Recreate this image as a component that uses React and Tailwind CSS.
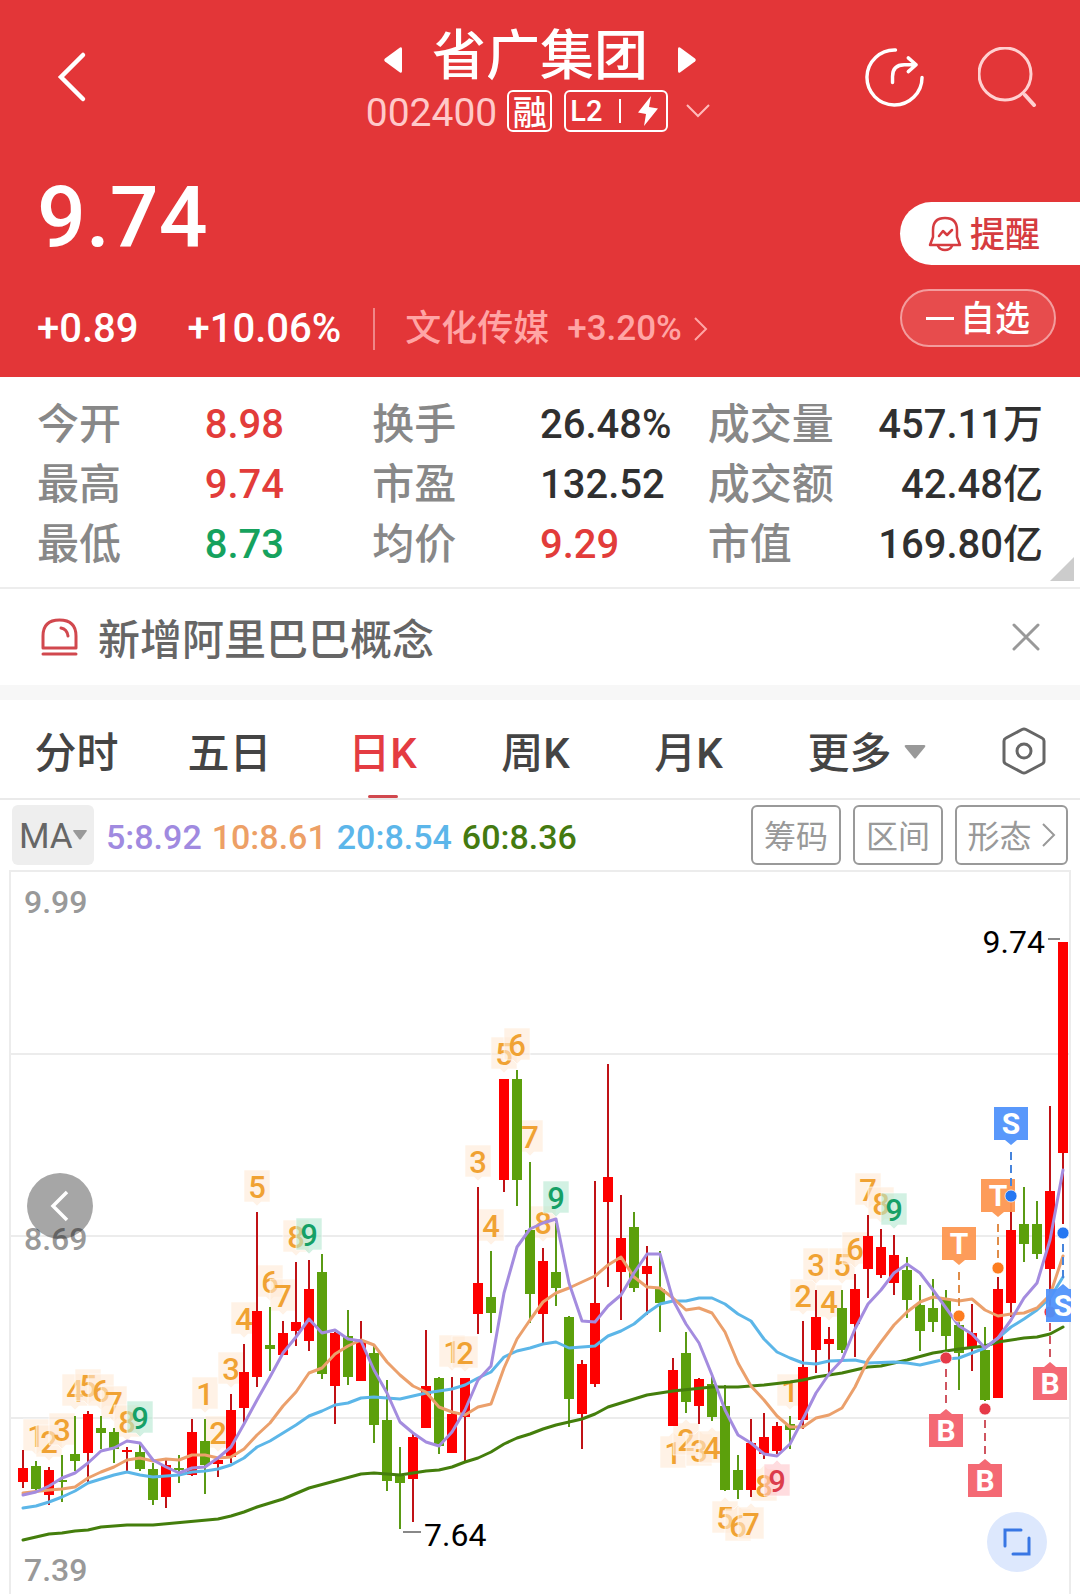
import { useState } from 'react';

const STATS = [
  { label: '今开', value: '8.98', tone: 'text-[#e23c3a]' },
  { label: '换手', value: '26.48%', tone: 'text-[#303030]' },
  { label: '成交量', value: '457.11万', tone: 'text-[#303030]' },
  { label: '最高', value: '9.74', tone: 'text-[#e23c3a]' },
  { label: '市盈', value: '132.52', tone: 'text-[#303030]' },
  { label: '成交额', value: '42.48亿', tone: 'text-[#303030]' },
  { label: '最低', value: '8.73', tone: 'text-[#16a25e]' },
  { label: '均价', value: '9.29', tone: 'text-[#e23c3a]' },
  { label: '市值', value: '169.80亿', tone: 'text-[#303030]' },
];

const TABS = ['分时', '五日', '日K', '周K', '月K'];

const AVERAGES = [
  { text: '5:8.92', tone: 'text-[#a08ae0]' },
  { text: '10:8.61', tone: 'text-[#eda066]' },
  { text: '20:8.54', tone: 'text-[#5cb6ea]' },
  { text: '60:8.36', tone: 'text-[#447a10]' },
];

// [up, high, low, body top, body bottom], one entry per trading day
const CANDLES = [
  [1, 1450, 1488, 1468, 1482], [0, 1461, 1492, 1466, 1489], [1, 1467, 1505, 1470, 1495],
  [0, 1455, 1502, 1480, 1482], [0, 1416, 1471, 1454, 1461], [1, 1411, 1482, 1414, 1453],
  [0, 1416, 1449, 1428, 1433], [0, 1428, 1463, 1432, 1449], [1, 1447, 1473, 1450, 1452],
  [0, 1443, 1471, 1452, 1469], [0, 1463, 1505, 1469, 1500], [1, 1460, 1508, 1465, 1497],
  [0, 1455, 1483, 1468, 1470], [1, 1419, 1476, 1432, 1475], [0, 1419, 1494, 1441, 1465],
  [1, 1458, 1477, 1460, 1464], [1, 1394, 1463, 1410, 1457], [1, 1344, 1423, 1372, 1408],
  [1, 1212, 1387, 1311, 1377], [0, 1307, 1371, 1345, 1349], [1, 1321, 1355, 1333, 1355],
  [1, 1262, 1346, 1322, 1331], [1, 1260, 1351, 1289, 1341], [0, 1254, 1379, 1272, 1374],
  [1, 1332, 1424, 1333, 1386], [0, 1310, 1385, 1336, 1377], [1, 1321, 1381, 1342, 1381],
  [0, 1345, 1443, 1353, 1425], [0, 1380, 1491, 1420, 1481], [0, 1447, 1529, 1476, 1483],
  [1, 1433, 1522, 1437, 1479], [1, 1330, 1428, 1386, 1428], [0, 1377, 1454, 1378, 1446],
  [1, 1377, 1453, 1414, 1453], [1, 1378, 1462, 1378, 1417], [1, 1187, 1334, 1283, 1314],
  [0, 1251, 1333, 1297, 1313], [1, 1079, 1192, 1079, 1180], [0, 1070, 1206, 1079, 1180],
  [0, 1162, 1323, 1230, 1294], [1, 1248, 1343, 1261, 1314], [0, 1223, 1306, 1272, 1288],
  [0, 1316, 1427, 1317, 1399], [1, 1360, 1449, 1364, 1414], [1, 1181, 1387, 1303, 1384],
  [1, 1064, 1287, 1177, 1202], [1, 1195, 1320, 1238, 1272], [0, 1212, 1292, 1227, 1288],
  [1, 1246, 1315, 1266, 1274], [0, 1251, 1332, 1289, 1303], [1, 1358, 1426, 1370, 1426],
  [0, 1332, 1413, 1353, 1402], [1, 1378, 1424, 1379, 1406], [0, 1377, 1421, 1384, 1417],
  [0, 1385, 1491, 1406, 1490], [0, 1455, 1499, 1470, 1490], [1, 1419, 1497, 1443, 1490],
  [1, 1413, 1459, 1437, 1454], [1, 1422, 1454, 1426, 1451], [0, 1416, 1449, 1424, 1430],
  [1, 1321, 1429, 1367, 1420], [1, 1290, 1373, 1317, 1350], [1, 1327, 1374, 1339, 1344],
  [0, 1290, 1353, 1308, 1350], [1, 1274, 1357, 1289, 1324], [1, 1215, 1298, 1236, 1269],
  [1, 1229, 1278, 1247, 1275], [1, 1235, 1295, 1255, 1283], [0, 1257, 1318, 1270, 1300],
  [0, 1285, 1351, 1305, 1331], [0, 1279, 1332, 1308, 1322], [0, 1290, 1363, 1299, 1336],
  [0, 1313, 1390, 1325, 1353], [1, 1304, 1371, 1333, 1348], [0, 1327, 1401, 1350, 1400],
  [1, 1277, 1398, 1289, 1398], [1, 1200, 1317, 1230, 1303], [0, 1187, 1262, 1224, 1244],
  [0, 1201, 1259, 1224, 1254], [1, 1106, 1307, 1191, 1269], [1, 942, 1224, 942, 1153],
];

const dayX = (i) => 23 + i * 13;

const MA60 =
  '23,1540 49,1534 62,1533 75,1531 88,1530 101,1527 127,1525 153,1525 218,1519 231,1516 244,1512 257,1507 270,1503 283,1499 309,1488 335,1481 361,1474 374,1473 400,1475 426,1471 439,1470 452,1467 465,1462 478,1458 491,1452 504,1444 517,1438 530,1434 543,1429 556,1425 569,1422 582,1419 595,1414 608,1407 647,1395 673,1391 712,1387 738,1387 764,1385 790,1382 803,1380 816,1377 842,1373 868,1367 881,1366 907,1360 933,1353 959,1349 985,1346 998,1342 1024,1338 1037,1337 1050,1334 1063,1327';
const MA20 =
  '23,1508 36,1506 49,1502 62,1497 75,1491 88,1483 101,1479 114,1475 127,1472 140,1475 153,1477 179,1475 192,1472 205,1471 218,1469 231,1465 244,1458 257,1447 270,1441 283,1433 296,1425 309,1416 322,1411 335,1405 348,1403 361,1398 374,1397 400,1399 413,1396 426,1393 439,1391 452,1389 465,1385 478,1378 491,1372 504,1357 517,1351 530,1348 543,1344 556,1342 569,1348 595,1346 608,1336 621,1331 634,1324 647,1313 660,1304 673,1301 686,1301 699,1298 712,1298 725,1304 738,1314 751,1321 764,1339 777,1352 790,1358 803,1363 816,1364 829,1361 855,1360 868,1363 894,1362 907,1363 920,1365 933,1362 946,1359 959,1358 972,1353 985,1348 998,1338 1011,1327 1024,1319 1037,1310 1050,1298 1063,1277';
const MA10 =
  '23,1493 49,1490 62,1489 75,1487 88,1478 101,1472 114,1467 127,1460 140,1458 153,1461 166,1459 179,1460 192,1455 205,1455 218,1458 231,1457 244,1449 257,1435 270,1423 283,1406 296,1392 309,1373 322,1368 335,1354 348,1346 361,1340 374,1345 387,1362 400,1375 413,1386 426,1392 439,1407 452,1412 465,1415 478,1407 491,1404 504,1368 517,1339 530,1320 543,1302 556,1293 569,1288 582,1282 595,1276 608,1265 621,1257 634,1277 647,1287 660,1288 673,1298 686,1310 699,1308 712,1313 725,1332 738,1363 751,1386 764,1400 777,1416 790,1427 803,1427 816,1418 829,1415 842,1408 855,1387 868,1360 881,1342 894,1325 907,1312 920,1302 933,1297 946,1299 959,1301 972,1299 985,1310 998,1316 1011,1314 1024,1313 1037,1308 1050,1295 1063,1256';
const MA5 =
  '23,1495 36,1492 49,1486 62,1478 75,1473 88,1463 101,1451 114,1448 127,1441 140,1443 153,1460 166,1467 179,1473 192,1468 205,1467 218,1458 231,1447 244,1424 257,1400 270,1377 283,1353 296,1337 309,1319 322,1333 335,1330 348,1339 361,1341 374,1370 387,1393 400,1422 413,1433 426,1442 439,1446 452,1432 465,1410 478,1380 491,1366 504,1293 517,1247 530,1229 543,1223 556,1219 569,1283 582,1321 595,1322 608,1306 621,1295 634,1273 647,1254 660,1254 673,1300 686,1324 699,1343 712,1375 725,1410 738,1435 751,1443 764,1454 777,1456 790,1444 803,1419 816,1393 829,1374 842,1360 855,1329 868,1304 881,1290 894,1273 907,1264 920,1273 933,1290 946,1308 959,1326 972,1334 985,1348 998,1338 1011,1320 1024,1298 1037,1283 1050,1240 1063,1170';

// nine-turn runs: first day, how many counts, and the side they are drawn on
const RUNS = [
  { start: 1, count: 9, below: false },
  { start: 14, count: 9, below: false },
  { start: 33, count: 9, below: false },
  { start: 50, count: 9, below: true },
  { start: 59, count: 9, below: false },
];

const SIGNALS = [
  { kind: 'B', day: 71, dot: 1358, box: 1414 },
  { kind: 'B', day: 74, dot: 1409, box: 1464 },
  { kind: 'B', day: 79, dot: 1312, box: 1367 },
  { kind: 'T', day: 72, dot: 1316, box: 1227 },
  { kind: 'T', day: 75, dot: 1268, box: 1179 },
  { kind: 'S', day: 76, dot: 1196, box: 1107 },
  { kind: 'S', day: 80, dot: 1233, box: 1289 },
];

const SIGNAL_COLORS = {
  B: { box: '#f3606b', dot: '#e63a48', line: '#cf5560' },
  T: { box: '#fd9650', dot: '#fd7d20', line: '#e08c48' },
  S: { box: '#4f92fb', dot: '#2577f2', line: '#4684dc' },
};

function CountTag({ day, n, below }) {
  const x = dayX(day);
  const [, high, low] = CANDLES[day];
  const top = below ? low + 10 : high - 42;
  const last = n === 9;
  const fill = !last ? '#ffead6' : below ? '#ffc4ca' : '#b4e8d0';
  const color = !last ? '#f0a233' : below ? '#dc3c4c' : '#16a066';
  const shape = below
    ? `M${x - 13} ${top}H${x - 4}L${x} ${top - 4}L${x + 4} ${top}H${x + 13}V${top + 32}H${x - 13}Z`
    : `M${x - 13} ${top}H${x + 13}V${top + 32}H${x + 4}L${x} ${top + 36}L${x - 4} ${top + 32}H${x - 13}Z`;
  return (
    <g>
      <path d={shape} fill={fill} fillOpacity="0.6" stroke="#fff" strokeOpacity="0.6" />
      <text x={x} y={top + 28} fill={color} fontSize="31" fontWeight="500" textAnchor="middle">
        {n}
      </text>
    </g>
  );
}

function Signal({ kind, day, dot, box }) {
  const x = dayX(day);
  const c = SIGNAL_COLORS[kind];
  const under = box > dot;
  const shape = under
    ? `M${x - 17} ${box}H${x - 6}L${x} ${box - 5}L${x + 6} ${box}H${x + 17}V${box + 33}H${x - 17}Z`
    : `M${x - 17} ${box}H${x + 17}V${box + 33}H${x + 6}L${x} ${box + 38}L${x - 6} ${box + 33}H${x - 17}Z`;
  return (
    <g>
      <line
        x1={x}
        x2={x}
        y1={under ? dot + 11 : box + 45}
        y2={under ? box - 9 : dot - 9}
        stroke={c.line}
        strokeWidth="2"
        strokeDasharray="8 5"
      />
      <circle cx={x} cy={dot} r="6" fill={c.dot} stroke="#fff" strokeWidth="1" strokeOpacity="0.7" />
      <path d={shape} fill={c.box} fillOpacity="0.94" />
      <text x={x} y={box + 27} fill="#fff" fontSize="30" fontWeight="700" textAnchor="middle">
        {kind}
      </text>
    </g>
  );
}

function KLineChart() {
  return (
    <svg viewBox="0 870 1080 724" className="block w-full" role="img" aria-label="日K线图">
      <defs>
        <clipPath id="plot">
          <rect x="10" y="870" width="1061" height="724" />
        </clipPath>
      </defs>
      <path d="M10 1594V871H1070V1594" fill="none" stroke="#ececec" strokeWidth="2" />
      <path d="M10 1054H1070M10 1236H1070M10 1418H1070" stroke="#ececec" strokeWidth="2" />

      <g clipPath="url(#plot)">
        {RUNS.map((run) =>
          Array.from({ length: run.count }, (_, k) => (
            <CountTag key={run.start + k} day={run.start + k} n={k + 1} below={run.below} />
          ))
        )}

        {CANDLES.map(([up, high, low, top, bottom], i) => (
          <g key={i}>
            <line
              x1={dayX(i)}
              x2={dayX(i)}
              y1={high}
              y2={low}
              stroke={up ? '#c01216' : '#5a9a14'}
              strokeWidth="2"
            />
            <rect
              x={dayX(i) - 5}
              y={top}
              width="10"
              height={bottom - top}
              fill={up ? '#fe0000' : '#5ca00c'}
            />
          </g>
        ))}

        <g fill="none" strokeWidth="3" strokeLinejoin="round" strokeLinecap="round">
          <polyline points={MA60} stroke="#447e0c" />
          <polyline points={MA20} stroke="#5cb6e8" />
          <polyline points={MA10} stroke="#eba06c" />
          <polyline points={MA5} stroke="#a48cdf" />
        </g>

        {SIGNALS.map((s) => (
          <Signal key={s.kind + s.day} {...s} />
        ))}
      </g>

      {/* Price scale and extremes */}
      <g fontSize="32" fontWeight="500" fill="#999">
        <text x="24" y="913">9.99</text>
        <text x="24" y="1250">8.69</text>
        <text x="24" y="1581">7.39</text>
      </g>
      <g fontSize="32" fill="#000">
        <text x="1045" y="953" textAnchor="end">9.74</text>
        <text x="424" y="1546">7.64</text>
      </g>
      <path d="M1048 939H1060M403 1532H421" stroke="#888" strokeWidth="2" />
    </svg>
  );
}

function Header() {
  return (
    <header className="bg-[#e33638] text-white pt-[22px] pb-[24px]">
      <div className="grid grid-cols-[1fr_auto_1fr] items-center">
        <button type="button" aria-label="返回" className="ml-[54px] justify-self-start">
          <svg width="34" height="54" viewBox="0 0 34 54" fill="none" stroke="currentColor" strokeWidth="4.500" strokeLinecap="round">
            <path d="M29 5L7 27L29 49" />
          </svg>
        </button>

        <div className="flex flex-col items-center gap-1.5">
          <div className="flex items-center gap-[30px] h-[62px] pt-[14px]">
            <button type="button" aria-label="上一只">
              <svg width="18" height="28" viewBox="0 0 18 28" fill="currentColor">
                <path d="M16 1.500Q18 0.500 18 3V25Q18 27.500 16 26.500L1 15.500Q-0.500 14 1 12.500Z" />
              </svg>
            </button>
            <h1 className="pb-1.5 text-[54px] leading-[48px] font-medium">省广集团</h1>
            <button type="button" aria-label="下一只">
              <svg width="18" height="28" viewBox="0 0 18 28" fill="currentColor">
                <path d="M2 1.500Q0 0.500 0 3V25Q0 27.500 2 26.500L17 15.500Q18.500 14 17 12.500Z" />
              </svg>
            </button>
          </div>
          <div className="flex items-center h-[42px] pr-1 font-medium">
            <span className="pt-1 text-[39px] leading-[42px] font-normal text-[#ffc9c9]">002400</span>
            <span className="ml-2.5 w-[45px] h-[42px] flex items-center justify-center pt-1 border-2 border-white rounded-md text-[34px] leading-[38px]">
              融
            </span>
            <span className="ml-3 h-[42px] w-[104px] flex items-center justify-between pl-1 pr-2 border-2 border-white rounded-md text-[29px] leading-[38px]">
              L2
              <span className="w-0.5 h-6 bg-white" />
              <svg width="20" height="30" viewBox="0 0 20 30" fill="currentColor">
                <path d="M13 0L0 16.500L8 18L6 30L20 12.500L11 11Z" />
              </svg>
            </span>
            <button type="button" aria-label="展开" className="ml-[18px]">
              <svg width="24" height="14" viewBox="0 0 24 14" fill="none" stroke="#fbb" strokeWidth="2">
                <path d="M1 1L12 12L23 1" />
              </svg>
            </button>
          </div>
        </div>

        <div className="flex items-center justify-end gap-[54px] mr-[42px]">
          <button type="button" aria-label="分享">
            <svg width="59" height="59" viewBox="0 0 60 60" fill="none" stroke="currentColor" strokeWidth="3.500" strokeLinecap="round" strokeLinejoin="round">
              <path d="M31 2A28 28 0 1 0 58 30" />
              <path d="M28 35V29Q28 17 40 17H52M44 10L52 17L44 24" />
            </svg>
          </button>
          <button type="button" aria-label="搜索" className="text-[#ffd0d0]">
            <svg width="60" height="60" viewBox="0 0 60 60" fill="none" stroke="currentColor" strokeWidth="3" strokeLinecap="round">
              <circle cx="27" cy="27" r="26" />
              <path d="M47 48L56 58" strokeWidth="4" />
            </svg>
          </button>
        </div>
      </div>

      <div className="flex justify-between">
        <div className="pl-[37px] pt-[42px]">
          <p className="text-[86px] leading-[88px] font-medium">9.74</p>
          <div className="mt-[43px] h-12 flex items-center text-[40px] leading-[48px] font-medium">
            <span>+0.89</span>
            <span className="ml-[49px]">+10.06%</span>
            <span className="ml-8 w-0.5 h-[42px] bg-[#f08688]" />
            <a href="#sector" className="ml-[30px] flex items-center text-[#ffa5a5]">
              <span className="text-[36px]">文化传媒</span>
              <span className="ml-[18px] text-[35px]">+3.20%</span>
              <svg className="ml-3" width="14" height="24" viewBox="0 0 14 24" fill="none" stroke="currentColor" strokeWidth="2">
                <path d="M1 1L12 12L1 23" />
              </svg>
            </a>
          </div>
        </div>

        <div className="w-[180px] pt-[70px] flex flex-col gap-6 items-start">
          <button type="button" className="w-full h-[63px] pl-7 flex items-center gap-2 rounded-l-full bg-white text-[#d63c40] text-[35px] leading-[48px] font-medium">
            <svg width="34" height="36" viewBox="0 0 34 36" fill="none" stroke="currentColor" strokeWidth="2.500" strokeLinejoin="round" strokeLinecap="round">
              <path d="M5 21V14Q5 2 17 2T29 14V21L32 29H2L5 21Z" />
              <path d="M10 30Q12 34 17 34T24 30" />
              <path d="M11 20L15 15L19 19L24 14" />
            </svg>
            <span className="pt-1">提醒</span>
          </button>
          <button type="button" className="w-[156px] h-[58px] flex items-center justify-center gap-1.5 rounded-full border-2 border-[#f39c9d] bg-[#e74c4d] text-[35px] leading-[48px] font-medium">
            <span className="w-7 h-[3px] bg-white" />
            <span className="pt-1">自选</span>
          </button>
        </div>
      </div>
    </header>
  );
}

function Stats() {
  return (
    <section className="relative border-b-2 border-[#ededed] pt-[18px] pb-3 px-[37px]">
      <dl className="grid grid-cols-3 text-[40px] leading-[60px] font-medium">
        {STATS.map((s, i) => (
          <div key={s.label} className="flex whitespace-nowrap">
            <dt className="w-1/2 text-[42px] text-[#888]">{s.label}</dt>
            <dd className={`${i % 3 === 2 ? 'w-1/2 flex justify-end' : ''} ${s.tone}`}>{s.value}</dd>
          </div>
        ))}
      </dl>
      <svg className="absolute right-1.5 bottom-1.5" width="24" height="24" viewBox="0 0 24 24" fill="#ccc">
        <path d="M24 0V24H0Z" />
      </svg>
    </section>
  );
}

function Notice({ onClose }) {
  return (
    <section className="h-24 flex items-center pl-[41px] pr-10">
      <svg width="37" height="38" viewBox="0 0 37 38" fill="none" stroke="#d1484e" strokeWidth="3" strokeLinecap="round" strokeLinejoin="round">
        <path d="M2 30V18Q2 2 18.500 2T35 18V30Z" />
        <path d="M20 10Q26 11 27 18" />
        <path d="M2 36H35" />
      </svg>
      <p className="ml-5 pt-2 text-[42px] leading-[60px] font-medium text-[#666]">新增阿里巴巴概念</p>
      <button type="button" aria-label="关闭" onClick={onClose} className="ml-auto">
        <svg width="28" height="28" viewBox="0 0 28 28" fill="none" stroke="#999" strokeWidth="3" strokeLinecap="round">
          <path d="M2 2L26 26M26 2L2 26" />
        </svg>
      </button>
    </section>
  );
}

export default function App() {
  const [tab, setTab] = useState('日K');
  const [notice, setNotice] = useState(true);

  return (
    <main className="bg-white overflow-hidden font-[Roboto,'Noto_Sans_CJK_SC',sans-serif]">
      <Header />
      <Stats />
      {notice && <Notice onClose={() => setNotice(false)} />}
      <div className="h-[15px] bg-[#f7f7f7]" />

      {/* Period tabs */}
      <nav className="h-[100px] grid grid-cols-[repeat(5,153fr)_203fr_112fr] border-b-2 border-[#eaeaea] text-[42px] leading-[60px] font-medium text-[#444]">
        {TABS.map((t) => (
          <button
            key={t}
            type="button"
            onClick={() => setTab(t)}
            className={`relative flex items-center justify-center pt-2.5 ${t === tab ? 'text-[#e43c42]' : ''}`}
          >
            {t}
            {t === tab && <span className="absolute bottom-0 w-[30px] h-[3px] rounded-full bg-[#d1484e]" />}
          </button>
        ))}
        <button type="button" aria-haspopup="menu" className="flex items-center justify-center gap-3 pt-1.5">
          <span className="pt-1">更多</span>
          <svg width="22" height="14" viewBox="0 0 22 14" fill="#999">
            <path d="M2 0H20Q22 0 21 2L12 13Q11 14 10 13L1 2Q0 0 2 0Z" />
          </svg>
        </button>
        <button type="button" aria-label="设置" className="flex items-center justify-center pt-1">
          <svg width="44" height="48" viewBox="0 0 44 48" fill="none" stroke="#666" strokeWidth="3" strokeLinejoin="round">
            <path d="M20 2.500Q22 1.500 24 2.500L40 11Q42 12 42 14V34Q42 36 40 37L24 45.500Q22 46.500 20 45.500L4 37Q2 36 2 34V14Q2 12 4 11Z" />
            <circle cx="22" cy="24" r="7" />
          </svg>
        </button>
      </nav>

      {/* Indicator bar */}
      <div className="h-[70px] flex items-center px-3">
        <label className="relative w-[82px] h-[60px] rounded-md bg-[#eee] flex items-center">
          <select aria-label="指标" className="w-full h-full pl-[7px] pt-1 appearance-none bg-transparent text-[35px] text-[#666]">
            <option>MA</option>
          </select>
          <svg className="absolute right-[7px] pointer-events-none" width="14" height="10" viewBox="0 0 14 10" fill="#999">
            <path d="M1 0H13Q14.500 0 13.500 1.500L8 9Q7 10 6 9L0.500 1.500Q-0.500 0 1 0Z" />
          </svg>
        </label>
        <div className="ml-3 pt-1 flex gap-2.5 text-[34px] leading-[60px] font-medium">
          {AVERAGES.map((a) => (
            <span key={a.text} className={a.tone}>{a.text}</span>
          ))}
        </div>
        <div className="ml-auto flex gap-3 text-[32px] text-[#999]">
          <button type="button" className="w-[90px] h-[60px] pt-1 border-2 border-[#999] rounded-md">筹码</button>
          <button type="button" className="w-[90px] h-[60px] pt-1 border-2 border-[#999] rounded-md">区间</button>
          <button type="button" className="w-[113px] h-[60px] border-2 border-[#999] rounded-md flex items-center justify-center gap-2.5">
            <span className="pt-1">形态</span>
            <svg width="14" height="24" viewBox="0 0 14 24" fill="none" stroke="#999" strokeWidth="2">
              <path d="M1 1L12 12L1 23" />
            </svg>
          </button>
        </div>
      </div>

      <section className="relative">
        <KLineChart />
        <button
          type="button"
          aria-label="向前"
          className="absolute left-[27px] top-[303px] size-[66px] rounded-full bg-black/35 flex items-center justify-center"
        >
          <svg width="20" height="32" viewBox="0 0 20 32" fill="none" stroke="#fff" strokeWidth="3.500">
            <path d="M17 2L3 16L17 30" />
          </svg>
        </button>
        <button
          type="button"
          aria-label="全屏"
          className="absolute right-[33px] bottom-[22px] size-[60px] rounded-full bg-[#dde8fd] flex items-center justify-center"
        >
          <svg width="30" height="30" viewBox="0 0 30 30" fill="none" stroke="#3876e4" strokeWidth="3" strokeLinecap="round">
            <path d="M19 3H3V19M27 11V27H11" />
          </svg>
        </button>
      </section>
    </main>
  );
}
